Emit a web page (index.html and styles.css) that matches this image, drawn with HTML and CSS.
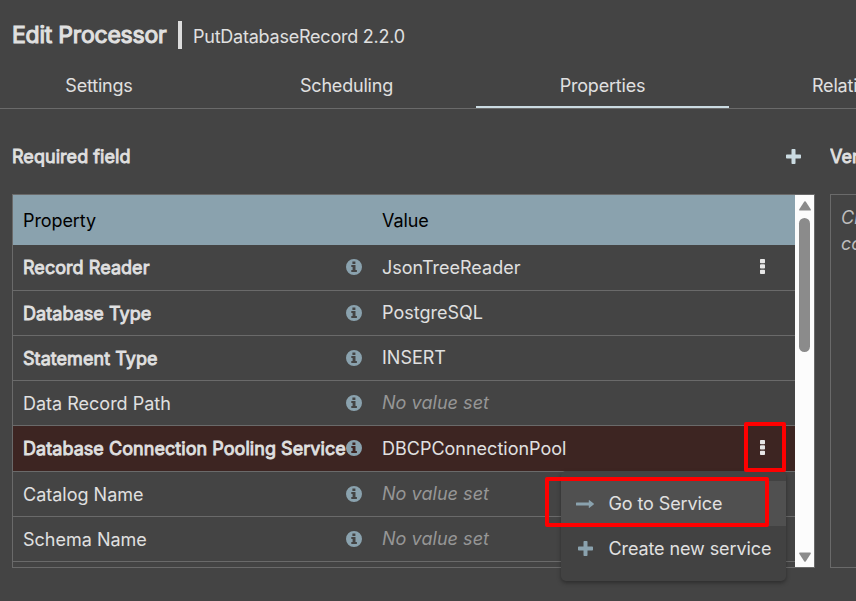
FILE: index.html
```html
<!DOCTYPE html>
<html lang="en">
<head>
<meta charset="utf-8">
<title>Edit Processor</title>
<link rel="stylesheet" href="styles.css">
</head>
<body>
<svg class="sprite" aria-hidden="true">
  <symbol id="info" viewBox="0 0 16 16"><path fill-rule="evenodd" d="M8 0a8 8 0 1 1 0 16A8 8 0 0 1 8 0zM6.400 2.600v2.400h3V2.600zM5.300 6.100v1.800h1.300v3.100H5.300v1.900h5.600v-1.900H9.500V6.100z"/></symbol>
  <symbol id="plus" viewBox="0 0 15 15"><path d="M6.3 0h2.400q.8 0 .8.8v4.700h4.700q.8 0 .8.8v2.400q0 .8-.8.8H9.500v4.700q0 .8-.8.8H6.300q-.8 0-.8-.8V9.500H.8q-.8 0-.8-.8V6.300q0-.8.8-.8h4.700V.8q0-.8.8-.8z"/></symbol>
  <symbol id="arrow" viewBox="0 0 18 8"><path d="M.5 2.500h12.300V.6q0-.9.700-.3l4.200 3.200q.5.500 0 1l-4.200 3.200q-.7.600-.7-.3V5.500H.5q-.5 0-.5-.5V3q0-.5.500-.5z"/></symbol>
  <symbol id="dots" viewBox="0 0 5 15"><path d="M0 .8q0-.8.800-.8h3.400q.8 0 .8.800v2.700q0 .8-.8.800H.8q-.8 0-.8-.8zM0 6.100q0-.8.800-.8h3.400q.8 0 .8.800v2.700q0 .8-.8.800H.8q-.8 0-.8-.8zM0 11.500q0-.8.800-.8h3.400q.8 0 .8.800v2.700q0 .8-.8.800H.8q-.8 0-.8-.8z"/></symbol>
</svg>
<header class="title">
  <h1 class="title-main">Edit Processor</h1>
  <span class="title-bar"></span>
  <span class="title-type">PutDatabaseRecord 2.2.0</span>
</header>
<nav class="tabs">
  <div class="tab tab-first">Settings</div>
  <div class="tab tab-second">Scheduling</div>
  <div class="tab active">Properties</div>
  <div class="tab tab-last">Relati</div>
</nav>
<main class="content">
  <section class="props">
    <div class="section-head"><span class="strong">Required field</span><svg class="add"><use href="#plus"/></svg></div>
    <div class="table">
      <div class="grid">
        <div class="row head"><span class="name">Property</span><span class="value">Value</span></div>
        <div class="row tall"><span class="name strong">Record Reader</span><svg class="info"><use href="#info"/></svg><span class="value">JsonTreeReader</span><svg class="dots"><use href="#dots"/></svg></div>
        <div class="row"><span class="name strong low">Database Type</span><svg class="info"><use href="#info"/></svg><span class="value">PostgreSQL</span></div>
        <div class="row"><span class="name strong low">Statement Type</span><svg class="info"><use href="#info"/></svg><span class="value">INSERT</span></div>
        <div class="row"><span class="name low">Data Record Path</span><svg class="info"><use href="#info"/></svg><span class="value unset">No value set</span></div>
        <div class="row tall selected"><span class="name strong">Database Connection Pooling Service</span><svg class="info"><use href="#info"/></svg><span class="value">DBCPConnectionPool</span><svg class="dots"><use href="#dots"/></svg></div>
        <div class="row"><span class="name low">Catalog Name</span><svg class="info"><use href="#info"/></svg><span class="value unset">No value set</span></div>
        <div class="row"><span class="name low">Schema Name</span><svg class="info"><use href="#info"/></svg><span class="value unset">No value set</span></div>
      </div>
      <div class="scrollbar">
        <svg class="caret" viewBox="0 0 12 10"><path d="M5.300.6q.7-.9 1.400 0l5 7.700q.6 1.200-.6 1.200H.9q-1.200 0-.6-1.200z"/></svg>
        <div class="thumb"></div>
        <svg class="caret down" viewBox="0 0 12 10"><path d="M5.300.6q.7-.9 1.400 0l5 7.700q.6 1.200-.6 1.200H.9q-1.200 0-.6-1.200z"/></svg>
      </div>
    </div>
  </section>
  <section class="verify">
    <div class="section-head"><span class="strong">Ver</span></div>
    <div class="verify-box">Cl<br>co</div>
  </section>
</main>
<div class="menu">
  <div class="item hover"><svg class="go"><use href="#arrow"/></svg><span>Go to Service</span></div>
  <div class="item"><svg class="new"><use href="#plus"/></svg><span>Create new service</span></div>
</div>
<div class="mark mark-dots"></div>
<div class="mark mark-go"></div>
</body>
</html>
```

FILE: styles.css
```css
* { box-sizing: border-box; }
body {
  margin: 0;
  width: 856px;
  height: 601px;
  overflow: hidden;
  background: #444;
  color: #e0e0e0;
  font: 18px/24px Inter, sans-serif;
  white-space: nowrap;
}
.sprite { position: absolute; width: 0; height: 0; }
svg { display: block; flex: none; }
.strong { -webkit-text-stroke: .85px currentColor; letter-spacing: .05px; }

.title { display: flex; height: 64px; padding: 21px 0 0 12px; }
.title-main { margin: 0; width: 166px; font-size: 23px; line-height: 28px; font-weight: 400; letter-spacing: -.22px; -webkit-text-stroke: 1.1px currentColor; }
.title-bar { width: 4px; height: 28px; margin-right: 11px; background: #dcdcdc; }
.title-type { padding-top: 4px; letter-spacing: -.23px; }

.tabs { display: flex; height: 45px; border-bottom: 1px solid #6a6a6a; letter-spacing: -.2px; }
.tab { flex: none; width: 253px; height: 44px; padding-top: 10px; text-align: center; border-bottom: 2px solid transparent; }
.tab-first { width: 223px; padding-right: 25px; }
.tab-second { padding-right: 6px; }
.tab-last { width: 127px; padding-left: 83px; text-align: left; overflow: hidden; }
.tab.active { border-color: #cbdbe2; }

.content { display: flex; gap: 15px; padding-left: 12px; }
.props { flex: none; width: 803px; }
.verify { flex: none; width: 26px; overflow: hidden; }
.section-head { display: flex; justify-content: space-between; height: 85px; padding: 36px 14.5px 0 0; }
.add { width: 15px; height: 15px; margin-top: 4px; fill: #cbdbe2; }
.table { display: flex; height: 374px; border: 1px solid #6a6a6a; overflow: hidden; }
.grid { flex: none; width: 782px; }
.row { display: flex; height: 45px; padding-left: 10px; padding-top: 10px; border-bottom: 1px solid #6a6a6a; }
.tall { height: 46px; padding-top: 11px; }
.head { height: 50px; padding-top: 14px; background: #8aa2ae; color: #000; border: 0; letter-spacing: -.1px; }
.name { flex: none; width: 323px; }
.head .name { width: 359px; }
.low { padding-top: 1px; }
.selected { background: #3d2522; }
.info { width: 16px; height: 16px; margin: 4px 20px 0 0; fill: #8aa2ae; }
.tall .info { margin-top: 3px; }
.value { flex: none; width: 378px; }
.unset { color: #969696; font-style: italic; letter-spacing: .05px; }
.dots { width: 5px; height: 15px; margin-top: 3px; fill: #e6e6e6; }
.scrollbar { display: flex; flex-direction: column; align-items: center; width: 19px; padding: 6px 0 5px; background: #fcfcfc; }
.caret { width: 12px; height: 10px; fill: #8b8b8b; }
.thumb { width: 11px; height: 134px; margin-top: 7px; border-radius: 6px; background: #8b8b8b; }
.down { margin-top: auto; transform: rotate(180deg); }
.verify-box { width: 240px; height: 374px; padding: 10px; border: 1px solid #6a6a6a; color: #bdbdbd; font-style: italic; line-height: 26px; }

.menu { position: absolute; left: 561px; top: 471px; width: 225px; height: 110px; padding-top: 10px; background: #424242; border-radius: 5px; box-shadow: 0 2px 4px rgba(0,0,0,.35); letter-spacing: -.1px; }
.item { display: flex; height: 45px; padding: 11px 0 0 15px; }
.hover { background: #505050; }
.go { width: 18px; height: 8px; margin: 8px 14.5px 0 0; fill: #8aa2ae; }
.new { width: 15px; height: 15px; margin: 4px 16px 0 1.5px; fill: #8aa2ae; }
.mark { position: absolute; border: 4px solid #f00; border-radius: 2px; }
.mark-dots { left: 744px; top: 422px; width: 42px; height: 50px; }
.mark-go { left: 545px; top: 477px; width: 224px; height: 50px; }
```
